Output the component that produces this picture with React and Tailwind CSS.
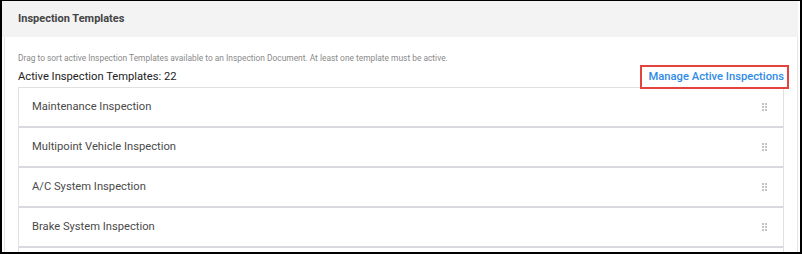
import React from "react";

const templates = [
    "Maintenance Inspection",
    "Multipoint Vehicle Inspection",
    "A/C System Inspection",
    "Brake System Inspection",
];

// Drag handle 

function DragHandle() {
    return (
        <div className="grid grid-cols-2 gap-[1px] w-[5px]">
            {Array.from({ length: 6 }).map((_, i) => (
                <span key={i} className="w-[2px] h-[2px] bg-[#c4c4c8]" />
            ))}
        </div>
    );
}

function TemplateRow({ name }) {
    return (
        <li className="h-[40px] flex items-center justify-between pl-[13px] pr-[16px] border-b-2 border-[#d9d9e0]">
            <span className="text-[11.2px] text-[#4a4a4a]">{name}</span>
            <DragHandle />
        </li>
    );
}

export default function App() {
    return (
        <div
            className="w-[802px] h-[254px] overflow-hidden bg-white border-black border-t border-l-2 border-r-2 border-b-2 pr-[2px]"
            style={{ fontFamily: "Roboto, 'Liberation Sans', sans-serif" }}
        >
            {/* Panel header */}
            <div className="h-[36px] bg-[#f3f3f3] flex items-center pl-[16px]">
                <h2 className="text-[11px] font-bold text-[#444]">Inspection Templates</h2>
            </div>

            {/* Panel body */}
            <div className="ml-[2px] h-full border-l border-r border-[#e6e6e6] pl-[13px] pr-[13px] pt-[15px]">
                <p className="text-[8.4px] leading-[12px] text-[#8a8a8a]">
                    Drag to sort active Inspection Templates available to an Inspection Document. At least one template must be active.
                </p>

                <div className="flex items-center justify-between mt-[4px] h-[18px]">
                    <span className="text-[11.2px] leading-[16px] text-[#222]">Active Inspection Templates: 22</span>
                    <span className="relative text-[11.2px] leading-[16px] font-medium text-[#2f8ae5]">
                        Manage Active Inspections
                        <span className="absolute -left-[9px] -right-[5px] -top-[4px] -bottom-[4px] border-2 border-[#e4423f] pointer-events-none" />
                    </span>
                </div>

                <ul className="mt-[1px] border-t border-l border-r border-[#e0e0e0]">
                    {templates.map((t) => (
                        <TemplateRow key={t} name={t} />
                    ))}
                    {/* next row, scrolled out of view */}
                    <li className="h-[40px]" />
                </ul>
            </div>
        </div>
    );
}
